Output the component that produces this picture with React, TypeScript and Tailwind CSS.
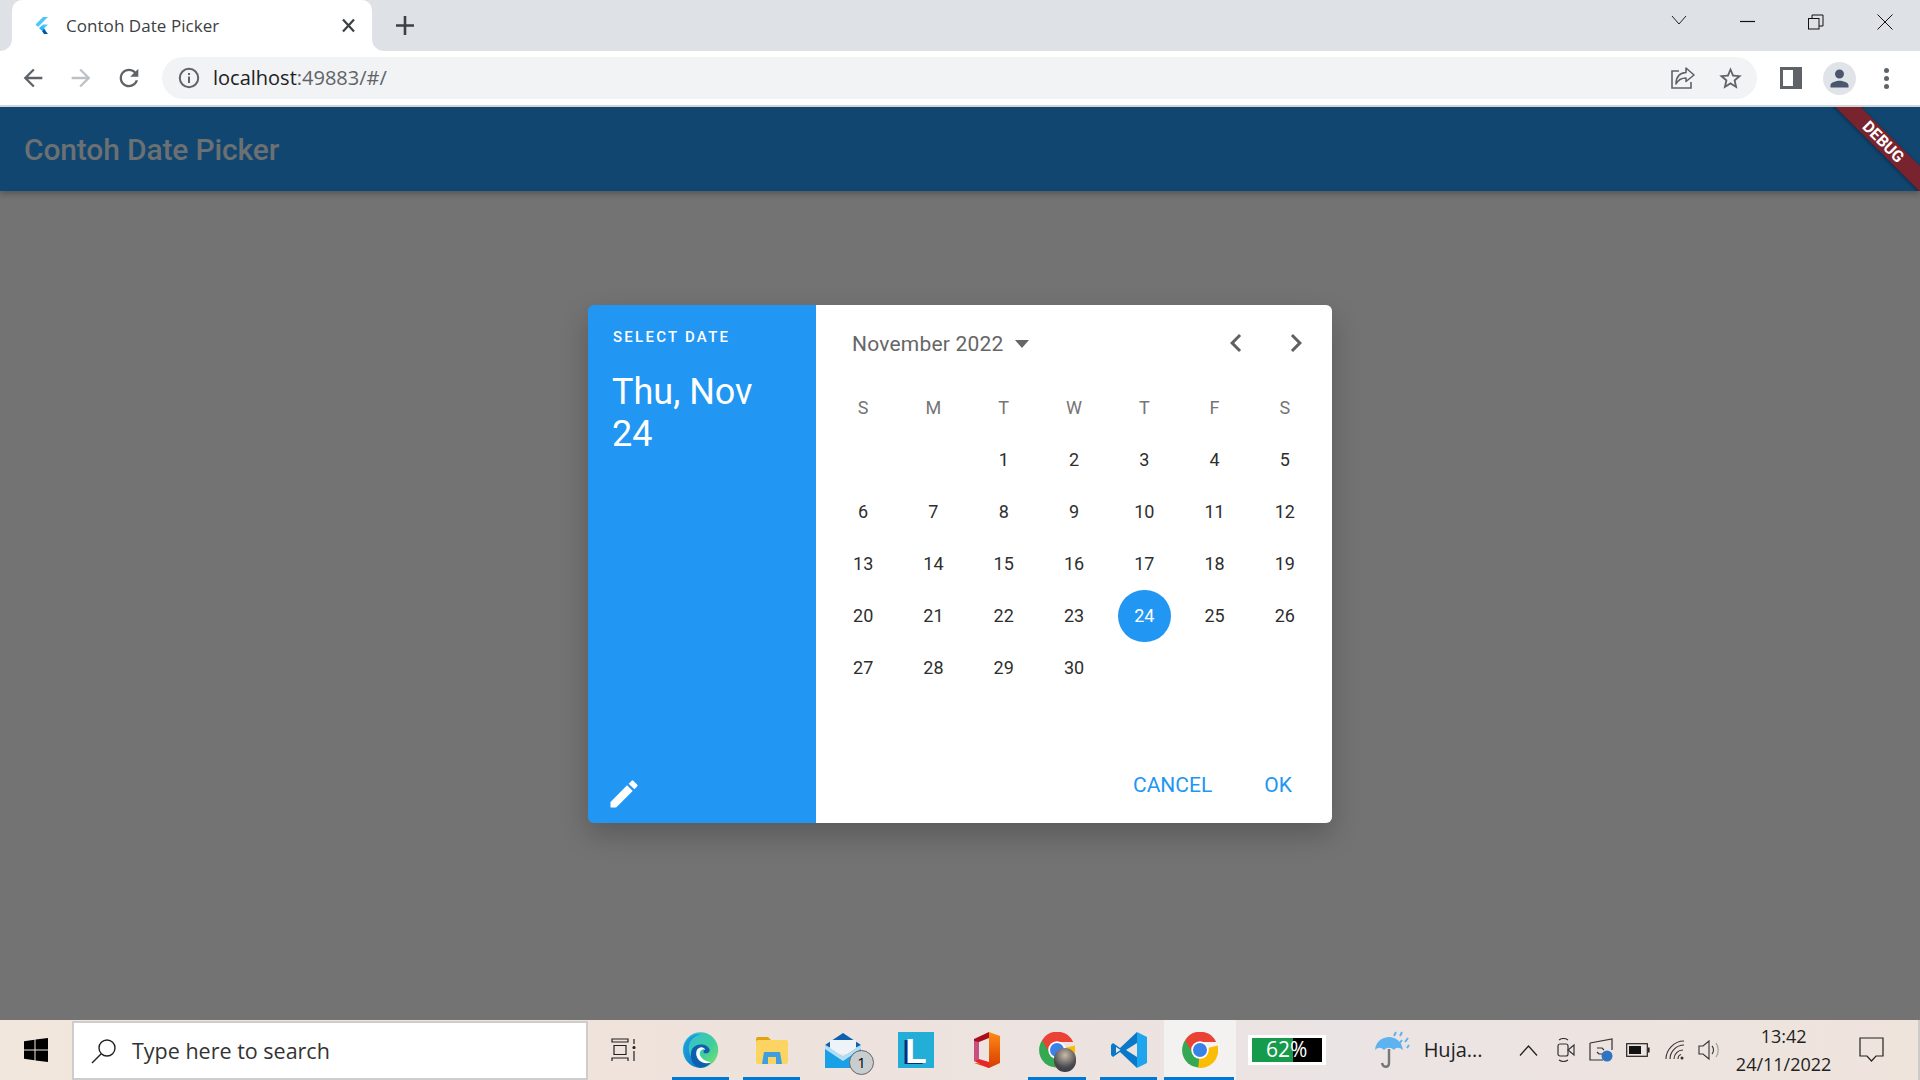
import React from "react";

const P = {
  back: "M20 11H7.83l5.59-5.59L12 4l-8 8 8 8 1.41-1.41L7.83 13H20v-2z",
  reload: "M17.65 6.35C16.2 4.9 14.21 4 12 4c-4.42 0-7.99 3.58-7.99 8s3.57 8 7.99 8c3.73 0 6.84-2.55 7.73-6h-2.08c-.82 2.33-3.04 4-5.65 4-3.31 0-6-2.69-6-6s2.69-6 6-6c1.66 0 3.14.69 4.22 1.78L13 11h7V4l-2.35 2.35z",
  star: "M22 9.24l-7.19-.62L12 2 9.19 8.63 2 9.24l5.46 4.73L5.82 21 12 17.27 18.18 21l-1.63-7.03L22 9.24zM12 15.4l-3.76 2.27 1-4.28-3.32-2.88 4.38-.38L12 6.1l1.71 4.04 4.38.38-3.32 2.88 1 4.28L12 15.4z",
  person: "M12 12c2.21 0 4-1.79 4-4s-1.79-4-4-4-4 1.79-4 4 1.79 4 4 4zm0 2c-2.67 0-8 1.34-8 4v2h16v-2c0-2.66-5.33-4-8-4z",
  edit: "M3 17.25V21h3.75L17.81 9.94l-3.75-3.75L3 17.25zM20.71 7.04c.39-.39.39-1.02 0-1.41l-2.34-2.34c-.39-.39-1.02-.39-1.41 0l-1.83 1.83 3.75 3.75 1.83-1.83z",
  left: "M15.41 7.41L14 6l-6 6 6 6 1.41-1.41L10.83 12z",
  right: "M10 6L8.59 7.41 13.17 12l-4.58 4.59L10 18l6-6z",
};

function Mi({ d, size, color }: { d: string; size: number; color: string }) {
  return (
    <svg width={size} height={size} viewBox="0 0 24 24" fill={color}>
      <path d={d} />
    </svg>
  );
}

function Flutter() {
  return (
    <svg width="18" height="20" viewBox="0 0 18 20">
      <polygon points="10,1 15,1 5,11 2.5,8.5" fill="#54c5f8" />
      <polygon points="6,12 10,8.5 15,8.5 9,14.5" fill="#54c5f8" />
      <polygon points="6.5,12.5 9,10 13,14.5 9,14.5" fill="#29b6f6" />
      <polygon points="9,15 11,13 15,18 11,18" fill="#01579b" />
    </svg>
  );
}

function Chrome({ size = 36 }: { size?: number }) {
  return (
    <svg width={size} height={size} viewBox="3.5 3.5 41 41">
      <path d="M24 24 L44 19 A20 20 0 0 1 21 44 L24 24Z" fill="#fbbc04" />
      <path d="M24 24 L22 44 A20 20 0 0 1 7 13 L24 24Z" fill="#34a853" />
      <path d="M24 15 H42.5 A20 20 0 0 0 7 13 L16 28 A10 10 0 0 1 24 15Z" fill="#ea4335" />
      <circle cx="24" cy="24" r="10" fill="#fff" />
      <circle cx="24" cy="24" r="8" fill="#3b82e8" />
    </svg>
  );
}

function Edge() {
  return (
    <svg width="37" height="38" viewBox="0 0 48 48">
      <defs>
        <linearGradient id="eg1" x1="0" y1="0" x2="1" y2="1">
          <stop offset="0" stopColor="#33bde0" />
          <stop offset="0.6" stopColor="#3fcf9a" />
          <stop offset="1" stopColor="#86e06a" />
        </linearGradient>
        <linearGradient id="eg2" x1="0" y1="0" x2="1" y2="1">
          <stop offset="0" stopColor="#1ea6e0" />
          <stop offset="1" stopColor="#1170c8" />
        </linearGradient>
      </defs>
      <circle cx="24" cy="24" r="23" fill="url(#eg1)" />
      <path d="M2 24 C2 10 14 2 24 4 C14 6 8 14 9 24 C10 36 20 46 32 45 C28 47 26 47 24 47 C10 47 2 36 2 24Z" fill="url(#eg2)" />
      <path d="M12 26 C14 14 34 14 36 24 C36 28 32 29 28 28 C30 22 22 20 19 25 C16 32 24 42 38 40 C34 45 28 47 23 47 C14 45 10 35 12 26Z" fill="#0f5fb0" />
      <path d="M19 25 C21 19 29 19 30 24 C27 22 23 24 23 29 C24 35 30 39 38 40 C28 44 16 37 19 25Z" fill="#ffffff" />
    </svg>
  );
}

function Folder() {
  return (
    <svg width="32" height="28" viewBox="0 0 32 28">
      <path d="M0 3 A2 2 0 0 1 2 1 H12 L15 4 V7 H0Z" fill="#e0a30e" />
      <rect x="0" y="4" width="32" height="24" rx="2" fill="#fcd462" />
      <path d="M8 16 H24 L26 28 H20 V21 H12 V28 H6Z" fill="#3f9ee0" />
    </svg>
  );
}

function Mail() {
  return (
    <div className="relative w-[36px] h-[36px]">
      <svg width="36" height="36" viewBox="0 0 36 36">
        <path d="M18 1 L36 13 L18 22 L0 13Z" fill="#0f5fb0" />
        <path d="M5 8 H31 V22 H5Z" fill="#eef3f8" />
        <path d="M0 13 L18 25 L36 13 V36 H0Z" fill="#1aa0e6" />
        <path d="M0 13 L18 25 L36 13 L36 17 L18 29 L0 17Z" fill="#f5f9fc" opacity="0.7" />
      </svg>
      <div className="absolute left-[24px] top-[18px] w-[25px] h-[25px] rounded-full bg-[#c8cdd0] border border-[#666] flex items-center justify-center font-['Open_Sans'] text-[15px] text-black">
        1
      </div>
    </div>
  );
}

function LTile() {
  return (
    <div className="relative ml-[3px] w-[36px] h-[36px] bg-[#23aed8] flex items-center justify-center overflow-hidden">
      <span className="font-['Liberation_Sans'] font-bold text-[35px] leading-none text-white [text-shadow:-3px_1px_0_#0b2a78]">L</span>
    </div>
  );
}

function Office() {
  return (
    <svg width="28" height="36" viewBox="0 0 28 36">
      <defs>
        <linearGradient id="of1" x1="0" y1="0" x2="0" y2="1">
          <stop offset="0" stopColor="#ff8a14" />
          <stop offset="1" stopColor="#d83b01" />
        </linearGradient>
      </defs>
      <path d="M17 0 L28 4 V31 L17 36 L2 31 L17 32 V0Z" fill="url(#of1)" />
      <path d="M17 0 L2 7 V29 L7 27 V10 L17 6Z" fill="#a80f1a" />
      <path d="M2 29 L7 27 L17 30 V36Z" fill="#e8222e" />
      <path d="M2 9 L7 10 V27 L2 29Z" fill="#c94f80" />
    </svg>
  );
}

function VSCode() {
  return (
    <svg width="36" height="36" viewBox="0 0 36 36">
      <path d="M26 0 L36 5 V31 L26 36 Z" fill="#1fa5ee" />
      <path d="M26 0 L9 16 L2 11 L0 13 V23 L2 25 L9 20 L26 36 V25 L15 18 L26 11Z" fill="#0a78c8" />
      <path d="M5 15 L9.5 18 L5 21Z" fill="#eee8e6" />
    </svg>
  );
}

function Slot({ children, line, active }: { children: React.ReactNode; line?: "wide" | "full"; active?: boolean }) {
  return (
    <div className={active ? "relative w-[71.4px] h-full flex items-center justify-center bg-[#f4f1f1]" : "relative w-[71.4px] h-full flex items-center justify-center"}>
      {children}
      {line === "wide" && <div className="absolute bottom-0 left-[7px] right-[7px] h-[3px] bg-[#0078d4]" />}
      {line === "full" && <div className="absolute bottom-0 left-0 right-[2px] h-[3px] bg-[#0078d4]" />}
    </div>
  );
}

const days: (number | null)[] = [null, null, ...Array.from({ length: 30 }, (_, i) => i + 1)];
const heads = ["S", "M", "T", "W", "T", "F", "S"];

export default function App() {
  return (
    <div className="w-[1920px] h-[1080px] flex flex-col overflow-hidden bg-[#737373]">
      {/* tab strip */}
      <div className="h-[51px] shrink-0 bg-[#dee1e6] flex items-stretch pl-[12px] font-['Open_Sans']">
        <div className="relative w-[360px] bg-white rounded-t-[10px] flex items-center pl-[21px]">
          <div className="absolute -left-[12px] bottom-0 w-[12px] h-[12px] bg-white">
            <div className="w-full h-full bg-[#dee1e6] rounded-br-[12px]" />
          </div>
          <div className="absolute -right-[12px] bottom-0 w-[12px] h-[12px] bg-white">
            <div className="w-full h-full bg-[#dee1e6] rounded-bl-[12px]" />
          </div>
          <Flutter />
          <span className="ml-[15px] text-[17px] tracking-[0.05px] text-[#3c4043]">Contoh Date Picker</span>
          <svg className="absolute left-[330px] top-[18px]" width="13" height="15" viewBox="0 0 13 15">
            <path d="M1 1.5 L12 13.5 M12 1.5 L1 13.5" stroke="#3c4043" strokeWidth="2.2" />
          </svg>
        </div>
        <svg className="ml-[24px] mt-[16px]" width="18" height="19" viewBox="0 0 18 19">
          <path d="M9 0 V19 M0 9.5 H18" stroke="#3c4043" strokeWidth="2.6" />
        </svg>
        <div className="ml-auto flex items-start pt-[14px]">
          <svg className="mr-[53px]" width="16" height="14" viewBox="0 0 16 14">
            <path d="M1 2 L8 10 L15 2" fill="none" stroke="#222" strokeWidth="1" />
          </svg>
          <svg className="mr-[52px]" width="16" height="14" viewBox="0 0 16 14">
            <path d="M0 7.5 H15" stroke="#111" strokeWidth="1.2" />
          </svg>
          <svg className="mr-[53px]" width="16" height="16" viewBox="0 0 16 16">
            <rect x="0.5" y="4.5" width="10.5" height="10.5" fill="none" stroke="#111" />
            <path d="M4 4 V1 H15 V12 H11" fill="none" stroke="#111" />
          </svg>
          <svg className="mr-[27px]" width="16" height="16" viewBox="0 0 16 16">
            <path d="M0.5 0.5 L15.5 15.5 M15.5 0.5 L0.5 15.5" stroke="#111" strokeWidth="1" />
          </svg>
        </div>
      </div>

      {/* toolbar */}
      <div className="h-[56px] shrink-0 bg-white border-b-2 border-[#dadada] flex items-center font-['Open_Sans']">
        <div className="w-[162px] flex items-center pl-[19px] gap-[20px] shrink-0">
          <Mi d={P.back} size={28} color="#5f6368" />
          <svg width="28" height="28" viewBox="0 0 24 24" fill="#bdc1c6" className="-scale-x-100">
            <path d={P.back} />
          </svg>
          <Mi d={P.reload} size={28} color="#5f6368" />
        </div>
        <div className="w-[1595px] h-[42px] rounded-full bg-[#f1f3f4] flex items-center pl-[16px] pr-[13px] shrink-0">
          <svg width="22" height="22" viewBox="0 0 22 22">
            <circle cx="11" cy="11" r="9.2" fill="none" stroke="#5f6368" strokeWidth="2" />
            <rect x="10" y="9.5" width="2" height="6.5" fill="#5f6368" />
            <rect x="10" y="6" width="2" height="2" fill="#5f6368" />
          </svg>
          <span className="ml-[13px] text-[20px] text-[#202124]">
            localhost<span className="text-[#5f6368]">:49883/#/</span>
          </span>
          <svg className="ml-auto" width="24" height="22" viewBox="0 0 24 22">
            <path d="M8 4 H1 V21 H20 V15" fill="none" stroke="#5f6368" strokeWidth="1.6" />
            <path d="M15 1 L23 8 L15 14.5 V11 C10 11 7 13 5 17 C5 11 8 6 15 5.5Z" fill="none" stroke="#5f6368" strokeWidth="1.6" strokeLinejoin="round" />
          </svg>
          <div className="ml-[22px]">
            <Mi d={P.star} size={27} color="#5f6368" />
          </div>
        </div>
        <div className="flex items-center ml-[23px]">
          <svg width="22" height="22" viewBox="0 0 22 22">
            <rect x="0" y="0" width="22" height="22" fill="#5f6368" />
            <rect x="3" y="3" width="10" height="16" fill="#fff" />
          </svg>
          <div className="ml-[21px] w-[33px] h-[33px] rounded-full bg-[#e0e3e8] flex items-center justify-center">
            <Mi d={P.person} size={27} color="#4a5670" />
          </div>
          <div className="ml-[28px] flex flex-col gap-[3px]">
            <div className="w-[5px] h-[5px] rounded-full bg-[#5f6368]" />
            <div className="w-[5px] h-[5px] rounded-full bg-[#5f6368]" />
            <div className="w-[5px] h-[5px] rounded-full bg-[#5f6368]" />
          </div>
        </div>
      </div>

      {/* app bar */}
      <div className="relative z-10 h-[84px] shrink-0 bg-[#114670] flex items-center pl-[24px] shadow-[0_3px_6px_rgba(0,0,0,0.25)] overflow-hidden">
        <span className="font-['Roboto'] font-medium text-[30px] tracking-[-0.15px] text-[#6b7073]">Contoh Date Picker</span>
        <div className="absolute top-[26px] -right-[38px] w-[150px] h-[18px] rotate-45 bg-[#79232f] shadow-[0_1px_4px_rgba(0,0,0,0.4)] flex items-center justify-center font-['Roboto'] font-bold text-[16px] text-white">
          DEBUG
        </div>
      </div>

      {/* scrim + dialog */}
      <div className="flex-1 bg-[#737373] flex items-center justify-center pb-[84px]">
        <div className="w-[744px] h-[518px] flex rounded-[6px] overflow-hidden shadow-[0_12px_28px_rgba(0,0,0,0.22)] font-['Roboto']">
          <div className="w-[228px] bg-[#2196f3] text-white flex flex-col pl-[25px] pt-[23px] pb-[11px]">
            <div className="text-[15px] leading-[18px] font-medium tracking-[2.25px]">SELECT DATE</div>
            <div className="mt-[25px] -ml-[1px] text-[36px] leading-[42px]">
              Thu, Nov
              <br />
              24
            </div>
            <div className="mt-auto -ml-[7px]">
              <Mi d={P.edit} size={36} color="#ffffff" />
            </div>
          </div>
          <div className="flex-1 bg-white flex flex-col">
            <div className="h-[78px] flex items-center pl-[36px] pr-[18px]">
              <span className="text-[21px] tracking-[0.2px] text-[#666666] mt-[2px]">November 2022</span>
              <svg className="ml-[12px] mt-[1px]" width="14" height="8" viewBox="0 0 14 8">
                <path d="M0 0 H14 L7 8Z" fill="#666" />
              </svg>
              <div className="ml-auto flex gap-[24px] -mt-[1px]">
                <Mi d={P.left} size={36} color="#616161" />
                <Mi d={P.right} size={36} color="#616161" />
              </div>
            </div>
            <div className="grid grid-cols-7 px-[12px]">
              {heads.map((h, i) => (
                <div key={i} className="h-[51px] flex items-center justify-center text-[18px] text-[#757575] pb-[2px]">
                  {h}
                </div>
              ))}
              {days.map((d, i) => (
                <div key={i} className="h-[52px] flex items-center justify-center text-[18px] text-[#2e2e2e]">
                  {d === 24 ? (
                    <div className="w-[53px] h-[52px] rounded-full bg-[#2196f3] text-white flex items-center justify-center">24</div>
                  ) : (
                    d
                  )}
                </div>
              ))}
            </div>
            <div className="mt-auto h-[70px] flex items-start pt-[17px] pl-[317px] text-[21px] text-[#2196f3]">
              <span>CANCEL</span>
              <span className="ml-[52px]">OK</span>
            </div>
          </div>
        </div>
      </div>

      {/* taskbar */}
      <div className="h-[60px] shrink-0 bg-[linear-gradient(90deg,#f2e7dc,#eee2dc_40%,#ebe4e4_70%,#efe4dc)] flex items-stretch font-['Open_Sans'] border-r-2 border-r-[#ccc]">
        <div className="w-[72px] flex items-center justify-center">
          <svg width="24" height="24" viewBox="0 0 24 24" fill="#000">
            <path d="M0 3.3 L10.5 1.8 V11.4 H0Z M11.5 1.6 L24 0 V11.4 H11.5Z M0 12.6 H10.5 V22.2 L0 20.7Z M11.5 12.6 H24 V24 L11.5 22.4Z" />
          </svg>
        </div>
        <div className="w-[516px] mt-[1px] bg-white border-2 border-[#cdcdcd] flex items-center pl-[17px]">
          <svg width="26" height="26" viewBox="0 0 26 26" fill="none" stroke="#222" strokeWidth="1.4">
            <circle cx="16" cy="10" r="8" />
            <path d="M10 16 L1 25" />
          </svg>
          <span className="ml-[15px] mt-[2px] text-[21.5px] text-[#333]">Type here to search</span>
        </div>
        <div className="w-[76.5px] h-full flex items-center justify-center pr-[5px]">
          <svg width="26" height="24" viewBox="0 0 26 24" fill="none" stroke="#222" strokeWidth="1.2">
            <path d="M1 1 H17 V4 H1Z M3 7.5 H15 V16.5 H3Z M1 23 V20 H17 V23" />
            <path d="M23 1 V6 M23 13 V23" />
            <circle cx="23" cy="9.5" r="1" fill="#222" />
          </svg>
        </div>
        <Slot line="wide"><Edge /></Slot>
        <Slot line="wide"><Folder /></Slot>
        <Slot><Mail /></Slot>
        <Slot><LTile /></Slot>
        <Slot><Office /></Slot>
        <Slot line="wide">
          <div className="relative">
            <Chrome />
            <div className="absolute left-[15px] top-[16px] w-[22px] h-[24px] rounded-full bg-[radial-gradient(circle_at_50%_30%,#c9bba8,#4a4a4f_60%,#2b3340)]" />
          </div>
        </Slot>
        <Slot line="wide"><VSCode /></Slot>
        <Slot line="full" active><Chrome /></Slot>
        <div className="ml-[12px] my-[15px] w-[78px] bg-white px-[4px] py-[3px] flex shrink-0 self-stretch">
          <div className="relative w-full flex">
            <div className="w-[41px] bg-[#169a4b]" />
            <div className="flex-1 bg-black" />
            <span className="absolute inset-0 flex items-center justify-center text-[21px] text-white">62%</span>
          </div>
        </div>
        <div className="ml-[49px] w-[144px] shrink-0 flex items-center">
          <svg width="36" height="38" viewBox="0 0 36 38">
            <path d="M0 19 C1 9 9 6 14 6 C21 6 27 11 28 19 C24 16 21 16 19 19 C16 16 12 16 9 19 C6 16 3 16 0 19Z" fill="#5cb3ef" />
            <path d="M14 18 V32 C14 37 8 37 7 32" fill="none" stroke="#777" strokeWidth="2.4" />
            <path d="M21 1 L19 5 M27 1 L25 5 M33 7 L30 11 M27 9 L24 13 M34 14 L32 17" stroke="#5cb3ef" strokeWidth="2" />
          </svg>
          <span className="ml-[13px] text-[20px] text-[#222]">Huja...</span>
        </div>
        <div className="flex items-center">
          <svg width="19" height="11" viewBox="0 0 19 11" fill="none" stroke="#222" strokeWidth="1.3">
            <path d="M1 10.5 L9.5 1 L18 10.5" />
          </svg>
          <svg className="ml-[19px]" width="18" height="24" viewBox="0 0 18 24" fill="none" stroke="#333" strokeWidth="1.2">
            <rect x="1" y="6" width="10" height="12" rx="2" />
            <path d="M11 12 L17 7 V17Z" />
            <path d="M2 2 C5 0 8 0 11 2 M2 22 C5 24 8 24 11 22" />
          </svg>
          <svg className="ml-[14px]" width="24" height="24" viewBox="0 0 24 24" fill="none" stroke="#333" strokeWidth="1.2">
            <path d="M1 5 L23 1 V12 M14 22 L1 22 V5" />
            <path d="M8 10 H13 L15 12 M15 16 H10 L8 14" />
            <circle cx="18" cy="18" r="5.5" fill="#2f74c0" stroke="none" />
          </svg>
          <svg className="ml-[13px]" width="24" height="14" viewBox="0 0 24 14">
            <rect x="0.7" y="0.7" width="20.6" height="12.6" fill="none" stroke="#222" strokeWidth="1.2" />
            <rect x="3" y="3" width="12" height="8" fill="#111" />
            <rect x="22" y="4.5" width="1.6" height="5" fill="#222" />
          </svg>
          <svg className="ml-[15px]" width="20" height="20" viewBox="0 0 20 20" fill="none" stroke="#333" strokeWidth="1.1">
            <path d="M1 19 C1 10 9 1 19 1 M5 19 C5 12 11 5 19 5 M9 19 C9 14 13 10 18 10 M13 19 C13 17 14 15 16 14.5" />
            <circle cx="17" cy="18" r="1.5" fill="#333" stroke="none" />
          </svg>
          <svg className="ml-[13px]" width="23" height="22" viewBox="0 0 23 22" fill="none" stroke="#333" strokeWidth="1.1">
            <path d="M1 7 H5 L11 2 V20 L5 15 H1Z" />
            <path d="M14 7 C16 9 16 13 14 15" />
            <path d="M18 4 C21 8 21 14 18 18" stroke="#999" />
          </svg>
        </div>
        <div className="ml-[13px] w-[100px] flex flex-col items-center justify-center text-[18px] leading-[28px] text-[#222]">
          <div>13:42</div>
          <div>24/11/2022</div>
        </div>
        <div className="ml-[25px] flex items-center">
          <svg width="25" height="26" viewBox="0 0 25 26" fill="none" stroke="#222" strokeWidth="1.2">
            <path d="M1 1 H24 V19 H17 L12.5 24 L8 19 H1Z" />
          </svg>
        </div>
      </div>
    </div>
  );
}
